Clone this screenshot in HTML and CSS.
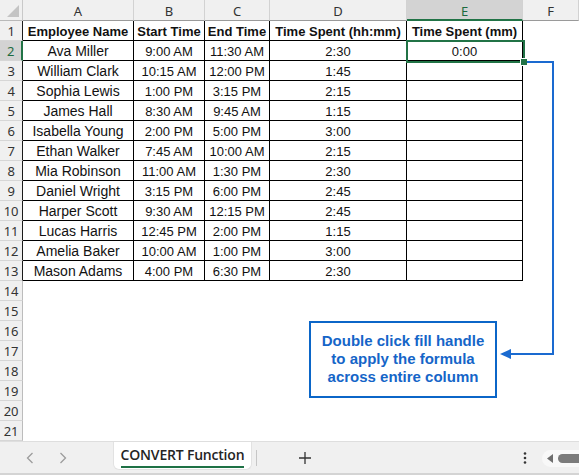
FILE: index.html
```html
<!DOCTYPE html>
<html>
<head>
<meta charset="utf-8">
<link rel="stylesheet" href="styles.css">
</head>
<body>
<div class="app">
  <div class="sheet">
    <div class="grid">
      <div class="corner"></div>
      <div class="ch">A</div><div class="ch">B</div><div class="ch">C</div><div class="ch">D</div><div class="ch ch-sel">E</div><div class="ch">F</div>

      <div class="rh rt">1</div>
      <div class="t b">Employee Name</div><div class="t b">Start Time</div><div class="t b">End Time</div><div class="t b">Time Spent (hh:mm)</div><div class="t b">Time Spent (mm)</div><div class="f"></div>

      <div class="rh rt rh-sel">2</div>
      <div class="t n">Ava Miller</div><div class="t">9:00 AM</div><div class="t">11:30 AM</div><div class="t">2:30</div><div class="t">0:00</div><div class="f"></div>

      <div class="rh rt">3</div>
      <div class="t n">William Clark</div><div class="t">10:15 AM</div><div class="t">12:00 PM</div><div class="t">1:45</div><div class="t"></div><div class="f"></div>

      <div class="rh rt">4</div>
      <div class="t n">Sophia Lewis</div><div class="t">1:00 PM</div><div class="t">3:15 PM</div><div class="t">2:15</div><div class="t"></div><div class="f"></div>

      <div class="rh rt">5</div>
      <div class="t n">James Hall</div><div class="t">8:30 AM</div><div class="t">9:45 AM</div><div class="t">1:15</div><div class="t"></div><div class="f"></div>

      <div class="rh rt">6</div>
      <div class="t n">Isabella Young</div><div class="t">2:00 PM</div><div class="t">5:00 PM</div><div class="t">3:00</div><div class="t"></div><div class="f"></div>

      <div class="rh rt">7</div>
      <div class="t n">Ethan Walker</div><div class="t">7:45 AM</div><div class="t">10:00 AM</div><div class="t">2:15</div><div class="t"></div><div class="f"></div>

      <div class="rh rt">8</div>
      <div class="t n">Mia Robinson</div><div class="t">11:00 AM</div><div class="t">1:30 PM</div><div class="t">2:30</div><div class="t"></div><div class="f"></div>

      <div class="rh rt">9</div>
      <div class="t n">Daniel Wright</div><div class="t">3:15 PM</div><div class="t">6:00 PM</div><div class="t">2:45</div><div class="t"></div><div class="f"></div>

      <div class="rh rt">10</div>
      <div class="t n">Harper Scott</div><div class="t">9:30 AM</div><div class="t">12:15 PM</div><div class="t">2:45</div><div class="t"></div><div class="f"></div>

      <div class="rh rt">11</div>
      <div class="t n">Lucas Harris</div><div class="t">12:45 PM</div><div class="t">2:00 PM</div><div class="t">1:15</div><div class="t"></div><div class="f"></div>

      <div class="rh rt">12</div>
      <div class="t n">Amelia Baker</div><div class="t">10:00 AM</div><div class="t">1:00 PM</div><div class="t">3:00</div><div class="t"></div><div class="f"></div>

      <div class="rh rt">13</div>
      <div class="t n">Mason Adams</div><div class="t">4:00 PM</div><div class="t">6:30 PM</div><div class="t">2:30</div><div class="t"></div><div class="f"></div>

      <div class="rh">14</div><div class="e"></div>
      <div class="rh">15</div><div class="e"></div>
      <div class="rh">16</div><div class="e"></div>
      <div class="rh">17</div><div class="e"></div>
      <div class="rh">18</div><div class="e"></div>
      <div class="rh">19</div><div class="e"></div>
      <div class="rh">20</div><div class="e"></div>
      <div class="rh">21</div><div class="e"></div>
    </div>

    <div class="selection"></div>
    <div class="handle"></div>

    <svg class="connector" width="579" height="441" viewBox="0 0 579 441">
      <path d="M527 62 H553 V354 H508" fill="none" stroke="#1a6ad0" stroke-width="2"/>
      <polygon points="500,354 511,349 511,359" fill="#1a6ad0"/>
    </svg>

    <div class="callout">
      <span>Double click fill handle</span>
      <span>to apply the formula</span>
      <span>across entire column</span>
    </div>
  </div>

  <div class="tabbar">
    <div class="nav">
      <svg width="8" height="12" viewBox="0 0 8 12"><path d="M6.5 1 L1.5 6 L6.5 11" fill="none" stroke="#9c9c9c" stroke-width="1.3"/></svg>
    </div>
    <div class="nav">
      <svg width="8" height="12" viewBox="0 0 8 12"><path d="M1.5 1 L6.5 6 L1.5 11" fill="none" stroke="#9c9c9c" stroke-width="1.3"/></svg>
    </div>
    <div class="tab"><span class="tab-label">CONVERT Function</span></div>
    <div class="sep"></div>
    <div class="add">
      <svg width="14" height="14" viewBox="0 0 14 14"><path d="M7 1 V13 M1 7 H13" stroke="#333" stroke-width="1.3"/></svg>
    </div>
    <div class="more">
      <svg width="4" height="12" viewBox="0 0 4 12"><circle cx="2" cy="1.5" r="1.3" fill="#333"/><circle cx="2" cy="6" r="1.3" fill="#333"/><circle cx="2" cy="10.5" r="1.3" fill="#333"/></svg>
    </div>
    <div class="hscroll">
      <svg width="6" height="9" viewBox="0 0 6 9"><polygon points="0,4.5 6,0 6,9" fill="#6e6e6e"/></svg>
      <div class="thumb"></div>
    </div>
  </div>
</div>
</body>
</html>
```

FILE: styles.css
```css
* { box-sizing: border-box; }

html, body {
  margin: 0;
  padding: 0;
  background: #ffffff;
}

.app {
  width: 579px;
  height: 475px;
  overflow: hidden;
  display: flex;
  flex-direction: column;
  font-family: "Liberation Sans", Arial, sans-serif;
}

.sheet {
  position: relative;
  height: 441px;
  flex: none;
}

.grid {
  display: grid;
  grid-template-columns: 23px 111px 71px 65px 137px 116px 56px;
  grid-template-rows: 21px repeat(21, 20px);
}

.corner {
  position: relative;
  background: #f0f0f0;
  border-right: 1px solid #c9c9c9;
  border-bottom: 1px solid #b9b9b9;
}
.corner::after {
  content: "";
  position: absolute;
  right: 3px;
  bottom: 3px;
  width: 12px;
  height: 12px;
  background: #c4c4c4;
  clip-path: polygon(100% 0, 100% 100%, 0 100%);
}

.ch {
  background: #f0f0f0;
  border-right: 1px solid #d2d2d2;
  border-bottom: 1px solid #9a9a9a;
  display: flex;
  align-items: center;
  justify-content: center;
  font-family: "Noto Sans", "Open Sans", sans-serif;
  font-size: 13px;
  color: #333;
  padding-top: 1px;
}
.ch-sel {
  background: #d3d3d3;
  color: #1c6b3f;
  border-bottom: 2px solid #217346;
  padding-top: 2px;
}

.rh {
  background: #f0f0f0;
  border-right: 1px solid #bcbcbc;
  border-bottom: 1px solid #d6d6d6;
  display: flex;
  align-items: center;
  justify-content: center;
  font-family: "Noto Sans", "Open Sans", sans-serif;
  font-size: 13px;
  color: #333;
  letter-spacing: -0.3px;
}
.rt {
  border-right-color: #1a1a1a;
}
.rh-sel {
  background: #d3d3d3;
  color: #1c6b3f;
  border-right: 2px solid #217346;
}

.t {
  border-right: 1px solid #000;
  border-bottom: 1px solid #000;
  display: flex;
  align-items: center;
  justify-content: center;
  font-size: 13px;
  color: #111;
  white-space: nowrap;
  overflow: hidden;
  padding-top: 1px;
}
.n {
  font-size: 14px;
}
.b {
  font-weight: bold;
  font-size: 13px;
}

.f { background: #fff; }
.e { grid-column: span 6; background: #fff; }

.selection {
  position: absolute;
  left: 406px;
  top: 40px;
  width: 119px;
  height: 23px;
  border: 2px solid #217346;
}
.handle {
  position: absolute;
  left: 520px;
  top: 58px;
  width: 8px;
  height: 8px;
  background: #217346;
  border: 1px solid #fff;
}

.connector {
  position: absolute;
  left: 0;
  top: 0;
}

.callout {
  position: absolute;
  left: 309px;
  top: 321px;
  width: 188px;
  height: 77px;
  border: 2px solid #0b66c8;
  background: #fff;
  display: flex;
  flex-direction: column;
  align-items: center;
  justify-content: center;
  font-family: "Liberation Sans", Arial, sans-serif;
  font-weight: bold;
  font-size: 15px;
  line-height: 18px;
  color: #1565c8;
  padding-bottom: 2px;
}

.tabbar {
  flex: none;
  height: 34px;
  background: #f0f0f0;
  border-top: 1px solid #dedede;
  border-bottom: 2px solid #d4d4d4;
  display: flex;
  align-items: flex-start;
}

.nav {
  width: 33px;
  height: 31px;
  display: flex;
  align-items: center;
  justify-content: center;
}
.nav:first-child { margin-left: 13px; }

.tab {
  margin-left: 34px;
  width: 139px;
  height: 28px;
  background: #fff;
  border-radius: 0 0 6px 6px;
  border-left: 1px solid #e2e2e2;
  border-right: 1px solid #e2e2e2;
  border-bottom: 1px solid #e2e2e2;
  display: flex;
  justify-content: center;
  padding-top: 4px;
}
.tab-label {
  font-family: "Open Sans", "Noto Sans", sans-serif;
  font-weight: 600;
  font-size: 14px;
  letter-spacing: -0.2px;
  color: #242424;
  line-height: 18px;
  height: 22px;
  border-bottom: 2.5px solid #1e7145;
}

.sep {
  width: 1px;
  height: 16px;
  margin-top: 8px;
  margin-left: 4px;
  background: #c6c6c6;
}

.add {
  margin-left: 40px;
  width: 16px;
  height: 31px;
  display: flex;
  align-items: center;
  justify-content: center;
}

.more {
  margin-left: 209px;
  width: 6px;
  height: 31px;
  display: flex;
  align-items: center;
  justify-content: center;
}

.hscroll {
  margin-left: 14px;
  margin-top: 8px;
  flex: 1;
  height: 17px;
  background: #f8f8f8;
  border-radius: 9px 0 0 9px;
  display: flex;
  align-items: center;
  padding-left: 5px;
  gap: 5px;
}
.thumb {
  flex: 1;
  height: 9px;
  background: #7b7b7b;
  border-radius: 5px 0 0 5px;
}
```
